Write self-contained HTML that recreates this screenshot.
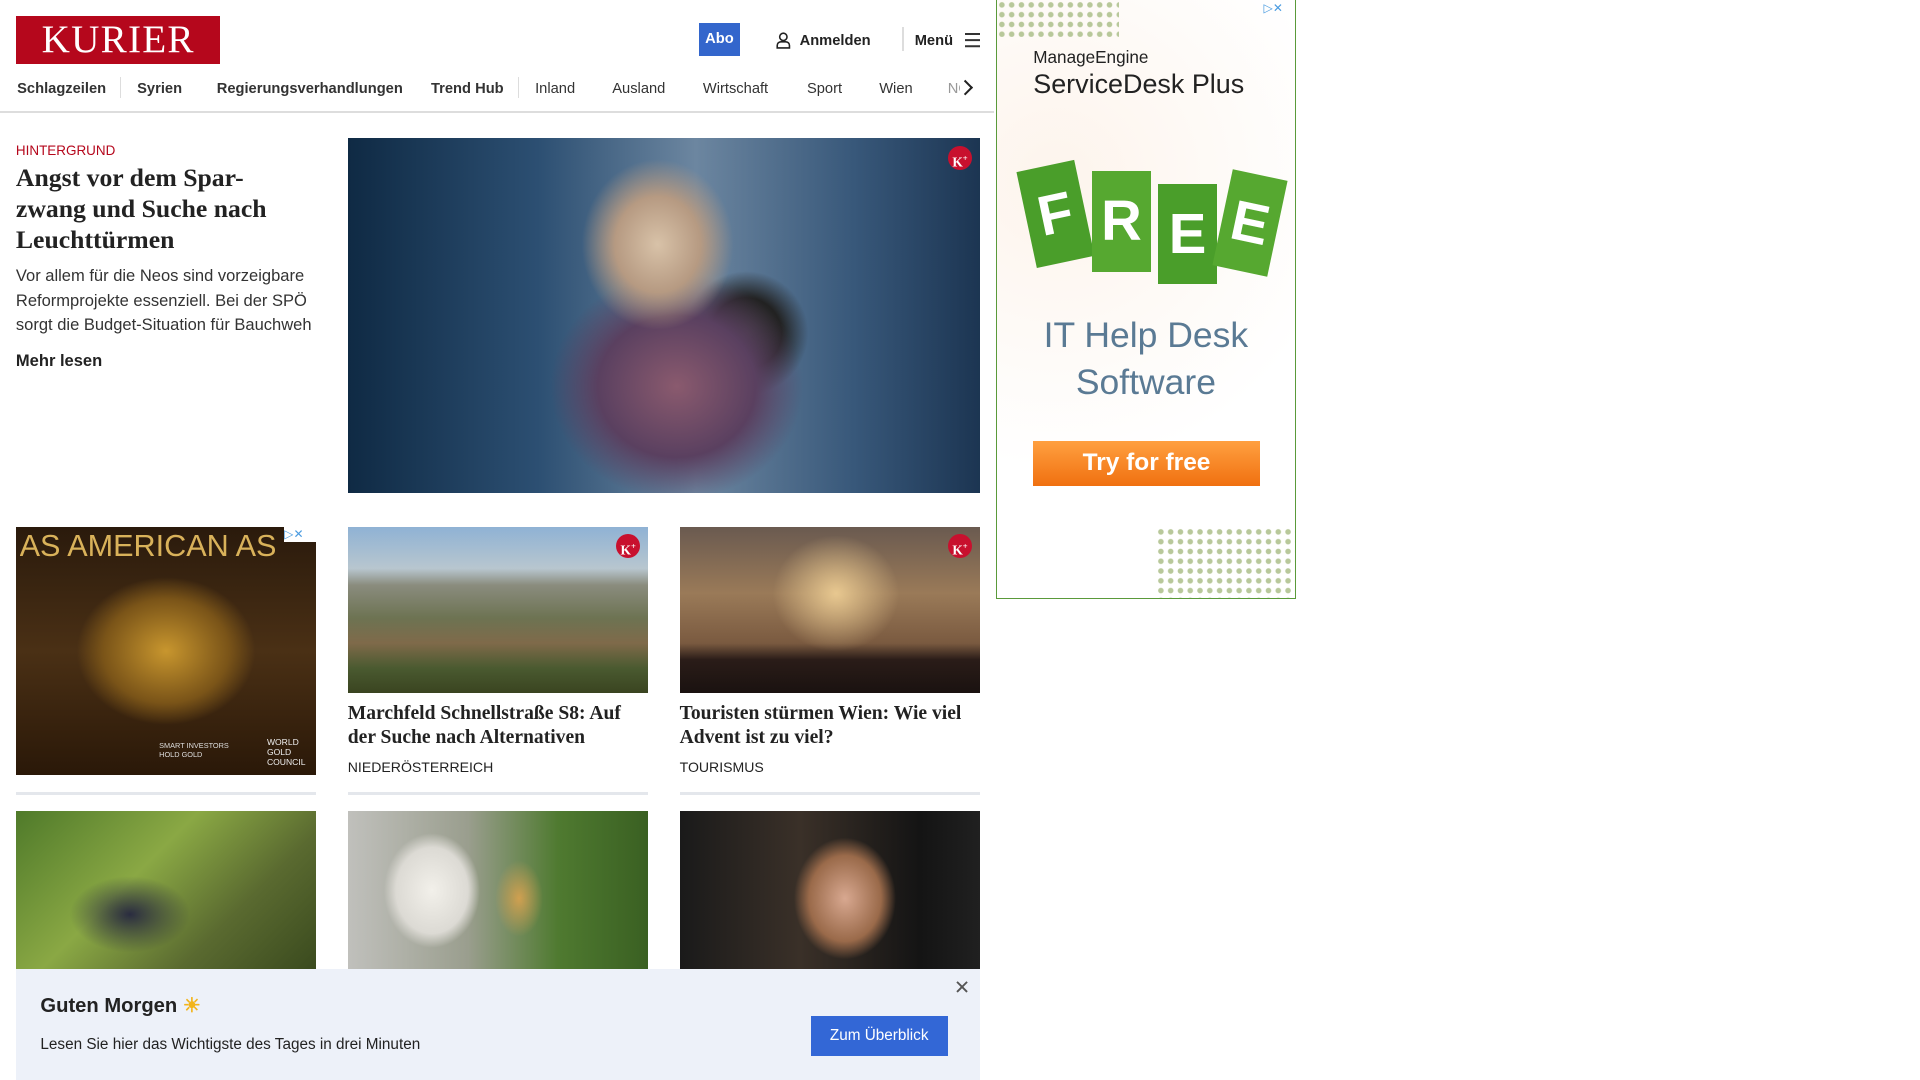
<!DOCTYPE html>
<html><head><meta charset="utf-8"><style>
html,body{margin:0;padding:0;background:#fff;overflow:hidden}
#w{zoom:1.2245;width:1570px;height:882px;position:relative;font-family:"Liberation Sans",sans-serif;color:#222}
.a{position:absolute}
.serif{font-family:"Liberation Serif",serif;font-weight:bold;color:#222}
.nav span{position:absolute;top:66px;font-size:12px;color:#333}
.kp{position:absolute;width:20px;height:20px;border-radius:50%;background:#c8102e;color:#fff;font:bold 11px "Liberation Serif",serif;text-align:center;line-height:20px}
.img{position:absolute;overflow:hidden}
.sep{position:absolute;top:647px;height:2px;background:#e4e7ec;width:245px}
</style></head><body><div id="w">
<div class="a" style="left:13px;top:13px;width:167px;height:39px;background:#b5071c;color:#fff;font:32px 'Liberation Serif',serif;text-align:center;line-height:40px;letter-spacing:1px">KURIER</div>
<div class="a" style="left:571px;top:19px;width:33px;height:27px;background:#3366cc;color:#fff;font:bold 12px 'Liberation Sans';text-align:center;line-height:27px">Abo</div>
<svg class="a" style="left:634px;top:26px" width="12" height="14" viewBox="0 0 12 14"><circle cx="6" cy="4" r="3" fill="none" stroke="#222" stroke-width="1.3"/><path d="M1 13v-2a3 3 0 0 1 3-3h4a3 3 0 0 1 3 3v2z" fill="none" stroke="#222" stroke-width="1.3"/></svg>
<div class="a" style="left:653px;top:27px;font-size:12px;font-weight:bold;color:#222">Anmelden</div>
<div class="a" style="left:737px;top:22px;width:1px;height:20px;background:#ddd"></div>
<div class="a" style="left:747px;top:27px;font-size:12px;font-weight:bold">Menü</div>
<div class="a" style="left:788px;top:27px;width:12px;height:1.5px;background:#333;box-shadow:0 5px 0 #333,0 10px 0 #333"></div>
<div class="nav">
<span style="left:14px;font-weight:bold">Schlagzeilen</span>
<div class="a" style="left:98px;top:63px;width:1px;height:17px;background:#ddd"></div>
<span style="left:112px;font-weight:bold">Syrien</span>
<span style="left:177px;font-weight:bold">Regierungsverhandlungen</span>
<span style="left:352px;font-weight:bold">Trend Hub</span>
<div class="a" style="left:423px;top:63px;width:1px;height:17px;background:#ddd"></div>
<span style="left:437px">Inland</span><span style="left:500px">Ausland</span><span style="left:574px">Wirtschaft</span><span style="left:659px">Sport</span><span style="left:718px">Wien</span><span style="left:774px;color:#999">NÖ</span>
</div>
<div class="a" style="left:784px;top:60px;width:20px;height:24px;background:#fff"></div>
<div class="a" style="left:784px;top:67px;width:7px;height:7px;border-right:2px solid #222;border-top:2px solid #222;transform:rotate(45deg)"></div>
<div class="a" style="left:0;top:91px;width:812px;height:1px;background:#ddd"></div>

<div class="a" style="left:13px;top:117px;font-size:11px;color:#b5071c">HINTERGRUND</div>
<div class="a serif" style="left:13px;top:132px;width:250px;font-size:21px;line-height:25.5px">Angst vor dem Spar-<br>zwang und Suche nach Leuchttürmen</div>
<div class="a" style="left:13px;top:216px;width:245px;font-size:13.5px;line-height:20px;color:#333">Vor allem für die Neos sind vorzeigbare Reformprojekte essenziell. Bei der SPÖ sorgt die Budget-Situation für Bauchweh</div>
<div class="a" style="left:13px;top:287px;font-size:13.5px;font-weight:bold">Mehr lesen</div>

<div class="img" style="left:284px;top:113px;width:516px;height:290px;background:radial-gradient(ellipse 15% 30% at 49% 30%,#d8c2a8 0%,#b69a82 45%,transparent 80%),radial-gradient(ellipse 25% 40% at 52% 70%,#8a5a6e 0%,#5a4060 50%,transparent 80%),radial-gradient(circle at 63% 55%,#333 0%,#222 8%,transparent 14%),linear-gradient(90deg,#0f2a44,#2c4f72 30%,#6c86a0 55%,#38587a 80%,#1c3552)"></div>
<div class="kp" style="left:774px;top:119px">K<sup style="font-size:7px">+</sup></div>

<div class="img" style="left:13px;top:430px;width:245px;height:203px;background:radial-gradient(ellipse 35% 35% at 50% 50%,#c8962e,#7a5418 60%,transparent 85%),linear-gradient(#2a1a0c,#4a3015 50%,#2a1808)"></div>
<div class="a" style="left:16px;top:432px;font:25px 'Liberation Sans';color:#d9b25a;width:240px;overflow:hidden;white-space:nowrap">AS AMERICAN AS</div>
<div class="a" style="left:130px;top:605px;font-size:6px;color:#ddd">SMART INVESTORS<br>HOLD GOLD</div>
<div class="a" style="left:218px;top:602px;font-size:7px;color:#eee">WORLD<br>GOLD<br>COUNCIL</div>
<div class="a" style="left:232px;top:430px;width:26px;height:13px;background:#fff;font-size:10px;color:#4a9be0;line-height:13px">▷✕</div>

<div class="img" style="left:284px;top:430px;width:245px;height:136px;background:linear-gradient(#8fb2d4 0%,#b8c6cf 25%,#8a8c7e 35%,#6d7352 55%,#7f6a4a 70%,#4a5a30 85%,#3a4420)"></div>
<div class="kp" style="left:503px;top:436px">K<sup style="font-size:7px">+</sup></div>
<div class="img" style="left:555px;top:430px;width:245px;height:136px;background:radial-gradient(ellipse 30% 50% at 52% 40%,#e8c890,transparent 70%),linear-gradient(#6a5a50 0%,#9a7a58 40%,#7a5a40 70%,#2a1c18 80%,#1a1210)"></div>
<div class="kp" style="left:774px;top:436px">K<sup style="font-size:7px">+</sup></div>

<div class="a serif" style="left:284px;top:573px;width:245px;font-size:16px;line-height:20px">Marchfeld Schnellstraße S8: Auf der Suche nach Alternativen</div>
<div class="a" style="left:284px;top:620px;font-size:11.5px;color:#222">NIEDERÖSTERREICH</div>
<div class="a serif" style="left:555px;top:573px;width:245px;font-size:16px;line-height:20px">Touristen stürmen Wien: Wie viel Advent ist zu viel?</div>
<div class="a" style="left:555px;top:620px;font-size:11.5px;color:#222">TOURISMUS</div>
<div class="sep" style="left:13px"></div><div class="sep" style="left:284px"></div><div class="sep" style="left:555px"></div>

<div class="img" style="left:13px;top:662px;width:245px;height:130px;background:radial-gradient(ellipse 25% 30% at 38% 65%,#2a2c40,transparent 80%),linear-gradient(135deg,#4f7a2a,#8aa844 40%,#5a6a30 70%,#3a4a1e)"></div>
<div class="img" style="left:284px;top:662px;width:245px;height:130px;background:radial-gradient(ellipse 20% 45% at 28% 50%,#f2f0ea,#dcdad4 60%,transparent 80%),radial-gradient(ellipse 10% 30% at 57% 55%,#d0a050,transparent 80%),linear-gradient(90deg,#c0c0bc,#9a9e8e 40%,#4f7a30 70%,#3a6022)"></div>
<div class="img" style="left:555px;top:662px;width:245px;height:130px;background:radial-gradient(ellipse 20% 45% at 55% 55%,#d8a890,#9a6a4a 60%,transparent 85%),linear-gradient(90deg,#1a1a1a,#3a3028 40%,#141414 80%,#202020)"></div>

<div class="a" style="left:13px;top:791px;width:787px;height:91px;background:#edf1f9"></div>
<div class="a" style="left:33px;top:811px;font-size:16.5px;font-weight:bold;color:#222">Guten Morgen <span style="color:#f2b41a">☀</span></div>
<div class="a" style="left:33px;top:846px;font-size:12.5px;color:#222">Lesen Sie hier das Wichtigste des Tages in drei Minuten</div>
<div class="a" style="left:662px;top:830px;width:112px;height:32px;background:#3367d6;color:#fff;font-size:12.5px;text-align:center;line-height:32px">Zum Überblick</div>
<div class="a" style="left:779px;top:797px;font-size:16px;color:#555">✕</div>

<div class="a" style="left:813px;top:0;width:244px;height:488px;border:1px solid #5a9a3a;border-top:none;background:radial-gradient(circle at 20% 30%,#fdf4ec,#fff 60%);overflow:hidden">
<div class="a" style="left:0;top:0;width:100px;height:30px;background-image:radial-gradient(circle,#b8c89a 2px,transparent 2.5px);background-size:8px 8px"></div>
<div class="a" style="left:130px;top:430px;width:114px;height:58px;background-image:radial-gradient(circle,#b8c89a 2px,transparent 2.5px);background-size:8px 8px"></div>
<div class="a" style="left:30px;top:38px;font-size:14px;color:#222">ManageEngine</div>
<div class="a" style="left:30px;top:56px;font-size:22px;color:#222">ServiceDesk Plus</div>
<div class="a" style="left:24px;top:135px;width:48px;height:80px;background:#4a9e2a;transform:rotate(-12deg);color:#fff;font:bold 46px 'Liberation Sans';text-align:center;line-height:80px">F</div>
<div class="a" style="left:78px;top:140px;width:48px;height:82px;background:#56a830;color:#fff;font:bold 46px 'Liberation Sans';text-align:center;line-height:82px">R</div>
<div class="a" style="left:132px;top:150px;width:48px;height:82px;background:#4a9e2a;color:#fff;font:bold 46px 'Liberation Sans';text-align:center;line-height:82px">E</div>
<div class="a" style="left:184px;top:142px;width:46px;height:80px;background:#56a830;transform:rotate(12deg);color:#fff;font:bold 46px 'Liberation Sans';text-align:center;line-height:80px">E</div>
<div class="a" style="left:0;top:255px;width:244px;text-align:center;font-size:29px;line-height:38px;color:#5a7a94">IT Help Desk<br>Software</div>
<div class="a" style="left:30px;top:360px;width:185px;height:37px;background:linear-gradient(#ffa040,#f07010);color:#fff;font:bold 20px 'Liberation Sans';text-align:center;line-height:36px">Try for free</div>
<div class="a" style="left:218px;top:1px;width:26px;height:13px;font-size:10px;color:#4a9be0;line-height:13px">▷✕</div>
</div>
</div></body></html>
